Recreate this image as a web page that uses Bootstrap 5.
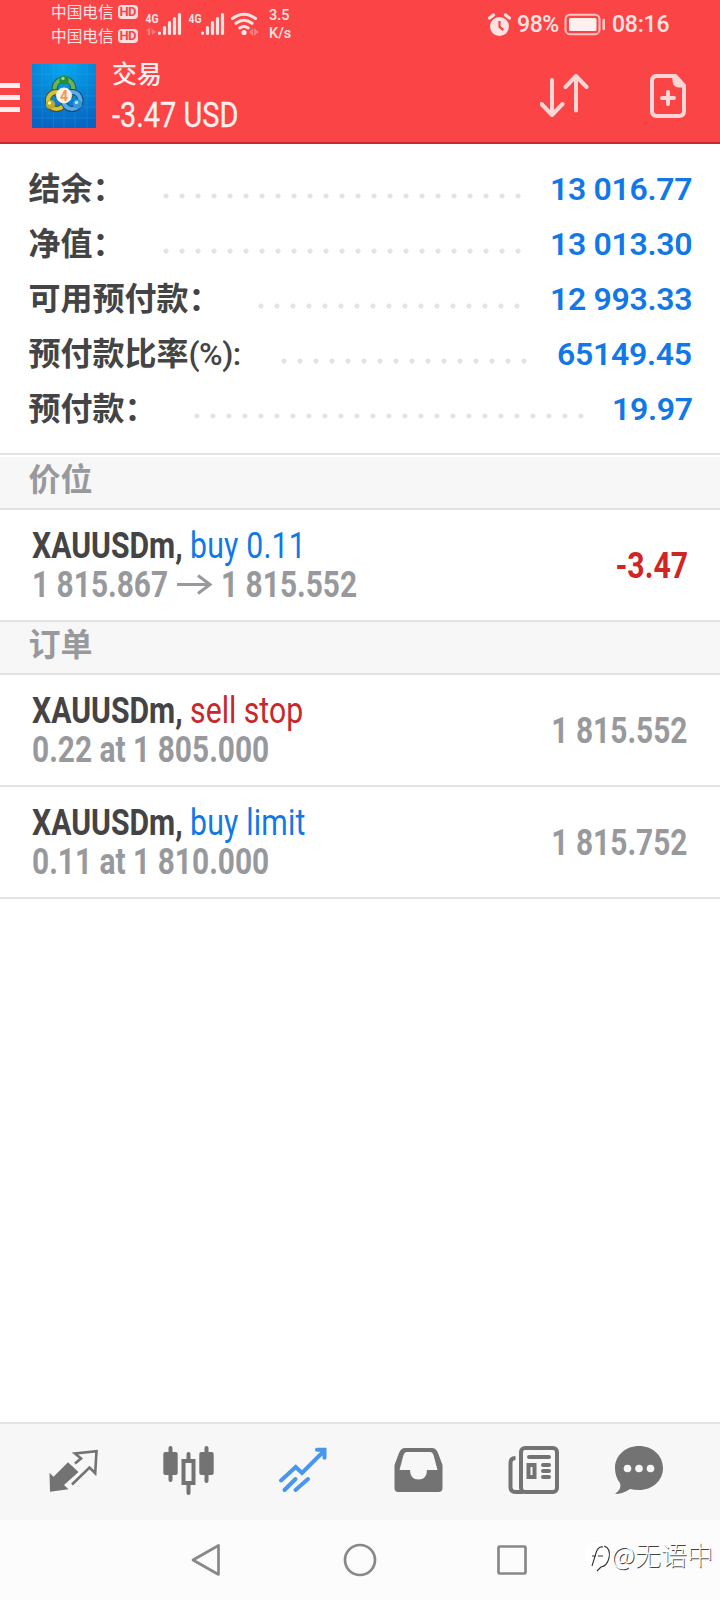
<!DOCTYPE html>
<html lang="zh-CN">
<head>
<meta charset="utf-8">
<meta name="viewport" content="width=device-width, initial-scale=1">
<title>交易</title>
<link href="https://cdn.jsdelivr.net/npm/bootstrap@5.3.0/dist/css/bootstrap.min.css" rel="stylesheet">
<style>
  body { font-family: Roboto, "Noto Sans CJK SC", sans-serif; background: #fff; color: #444; }
  .screen { width: 720px; height: 1600px; }
  svg { display: block; flex: none; }
  .cn { font-family: "Noto Sans CJK SC", sans-serif; }
  .cond { display: block; width: max-content; white-space: pre; font-size: 37px; line-height: 39px; transform: scaleX(.815); transform-origin: 0 50%; }
  .cond.from-end { transform-origin: 100% 50%; }
  .cond.soft, .soft .cond { transform: scaleX(.808); }
  .cond.opening { width: 145px; }
  .cond.profit { font-size: 35px; line-height: 38px; margin-top: 10px; transform: scaleX(.826); -webkit-text-stroke: .3px currentColor; }
  .top-area { background: #fb4446; border-bottom: 2px solid #c2282d; height: 144px; }
  .status { height: 48px; color: #ffe3e3; }
  .carriers { margin-left: 51px; font-size: 15.7px; line-height: 24px; height: 48px; width: 92px; }
  .hd { width: 20px; height: 14px; border-radius: 4px; background: #ffdede; color: #fb4446; font: 700 13px/14px Roboto, sans-serif; letter-spacing: -.5px; margin-left: 4px; }
  .speed { font-size: 14.5px; line-height: 18px; width: 30px; margin: 1px 0 0 10px; font-weight: 500; }
  .battery-text { font-size: 23px; line-height: 30px; font-weight: 500; letter-spacing: -.4px; }
  .power { padding-top: 2px; }
  .percent { width: 47px; margin-left: 5px; } .clock { width: 114px; padding-left: 6px; letter-spacing: -.2px; }
  .title-row { height: 94px; color: #fff0f0; }
  .title-text { margin-left: 12px; }
  .title-cn { font-size: 25px; line-height: 30px; margin-top: 9px; font-weight: 500; }
  .account { height: 309px; padding: 17px 28px 0 28.5px; }
  .account-row { height: 55px; }
  .account-row .cn { font-size: 32px; line-height: 51px; font-weight: 700; white-space: nowrap; }
  .account-row .percent-sign { font-family: Roboto, sans-serif; font-weight: 500; letter-spacing: -.5px; }
  .dots { flex: none; height: 16px; margin-top: 26.5px; background: radial-gradient(circle, #e3e3e3 2.2px, transparent 2.9px) 0 0 / 16px 16px repeat-x; }
  .dots-23 { width: 368px; margin-right: 24.5px; }
  .dots-17 { width: 272px; margin-right: 25px; }
  .dots-16 { width: 256px; margin-right: 25px; }
  .dots-25 { width: 400px; margin-right: 23.5px; }
  .amount { flex: none; font-size: 32px; font-weight: 600; color: #1178e8; line-height: 57px; white-space: pre; letter-spacing: -.3px; }
  .w-a { width: 142px; } .w-b { width: 135px; } .w-c { width: 80px; }
  .section-head { background: #f7f7f7; border-bottom: 2px solid #e2e2e3; color: #98999d; font-size: 32px; font-weight: 700; padding-left: 28.5px; height: 53px; line-height: 41px; }
  .section-first { border-top: 2px solid #fff; box-shadow: 0 -2px #e2e2e3; margin-top: 2px; height: 55px; }
  .deal { height: 112px; border-bottom: 2px solid #e2e2e3; padding: 16px 32px 0; }
  .deal b { font-weight: 700; color: #444; }
  .soft { color: #98999d; font-weight: 700; }
  .blue { color: #1178e8; letter-spacing: .25px; } .red { color: #c8282a; } .loss { color: #d12424; font-weight: 700; }
  .quote { margin-top: 20px; }
  .arrow { margin-right: 8px; }
  .tabs { height: 98px; background: #f7f7f7; border-top: 2px solid #e2e2e3; }
  .sysnav { height: 80px; background: #fcfcfc; }
  .stamp { right: 7px; top: 14px; color: #fff; font-size: 26px; line-height: 40px; font-weight: 300; text-shadow: .8px .8px .6px #444; }
</style>
</head>
<body>
<main class="screen d-flex flex-column overflow-hidden">
  <header class="top-area flex-shrink-0">
    <div class="status d-flex align-items-center">
      <div class="carriers cn flex-shrink-0">
        <div class="d-flex align-items-center"><span>中国电信</span><span class="hd text-center">HD</span></div>
        <div class="d-flex align-items-center"><span>中国电信</span><span class="hd text-center">HD</span></div>
      </div>
      <svg width="116" height="48" viewBox="143 0 116 48" fill="#ffe3e3">
        <g font-family="Roboto" font-size="13" font-weight="700"><text x="145.5" y="23" textLength="13" lengthAdjust="spacingAndGlyphs">4G</text><text x="188.5" y="23" textLength="13" lengthAdjust="spacingAndGlyphs">4G</text></g>
        <g stroke="#ffe3e3" stroke-width="3.2" stroke-linecap="round"><path d="M159.5 33v.3M164.5 27.500v6M169.500 22.500v11M174.500 18.500v15M179.500 14.500v19M202.500 33v.3M207.500 27.500v6M212.500 22.500v11M217.500 18.500v15M222.500 14.500v19"/></g>
        <path opacity=".35" d="M146 31l4-4v8h-2v-4zM151 28l5 4-4 3zM249 32l4-4v8zM254 28l4.500 4-4.500 4z"/>
        <g fill="none" stroke="#ffe3e3" stroke-width="3" stroke-linecap="round"><path d="M232.500 18.500q11.500-8.500 23 0M236 23.300q8-6 16 0M239.800 28q4.200-3 8.400 0"/></g><circle cx="244" cy="32.500" r="2.600"/>
      </svg>
      <div class="speed"><div>3.5</div><div>K/s</div></div>
      <div class="power d-flex align-items-center ms-auto">
        <svg width="25" height="26" viewBox="487 11 25 26"><circle cx="499.500" cy="25.500" r="9.500" fill="#ffe3e3"/><path d="M499.500 20v6l4 3" fill="none" stroke="#fb4446" stroke-width="2.200"/><path d="M489.500 17l4-3M509.500 17l-4-3" stroke="#ffe3e3" stroke-width="3.200" stroke-linecap="round"/></svg>
        <span class="battery-text percent">98%</span>
        <svg width="42" height="24" viewBox="564 13 42 24"><rect x="565.500" y="14.700" width="34" height="19.500" rx="4.500" fill="none" stroke="#ffc5c5" stroke-width="2"/><rect x="569" y="18" width="27.500" height="13" rx="1.500" fill="#fff0f0"/><path d="M603.700 20v9" stroke="#ffc5c5" stroke-width="2.600" stroke-linecap="round"/></svg>
        <span class="battery-text clock">08:16</span>
      </div>
    </div>
    <div class="title-row d-flex">
      <svg width="20" height="94" viewBox="0 48 20 94" fill="#fff0f0"><path d="M0 83h20v5H0zM0 95h20v5H0zM0 107h20v5H0z"/></svg>
      <svg class="ms-2" width="72" height="94" viewBox="28 48 72 94">
        <defs><radialGradient id="sky" cx=".5" cy="0" r="1"><stop stop-color="#06a9ee"/><stop offset="1" stop-color="#0864c1"/></radialGradient></defs>
        <path fill="url(#sky)" d="M32 64h64v64H32z"/>
        <path d="M42 64v64M53.500 64v64M64 64v64M75 64v64M87 64v64M32 74h64M32 85h64M32 96h64M32 107h64M32 118h64" stroke="#37b3ef" stroke-width=".6" opacity=".4"/>
        <g fill="none">
          <circle cx="64" cy="88.500" r="9.300" stroke="#1e5940" stroke-width="6"/><circle cx="64" cy="88.500" r="9.300" stroke="#66b658" stroke-width="4.200"/>
          <circle cx="56.500" cy="100.500" r="8.500" stroke="#514c28" stroke-width="6"/><circle cx="56.500" cy="100.500" r="8.500" stroke="#cfc43d" stroke-width="4.200"/>
          <circle cx="72" cy="100.500" r="8.500" stroke="#164777" stroke-width="6"/><circle cx="72" cy="100.500" r="8.500" stroke="#55ace6" stroke-width="4.200"/>
        </g>
        <circle cx="64" cy="80" r="4.600" fill="#278e38"/><circle cx="50.500" cy="104.500" r="4.600" fill="#bca82a"/><circle cx="77.500" cy="104" r="4.600" fill="#3896d7"/><circle cx="63" cy="78.500" r="1.700" fill="#9bd88c"/><circle cx="49.500" cy="103" r="1.700" fill="#fff9a0"/><circle cx="76.500" cy="102.500" r="1.700" fill="#b6e5ff"/>
        <circle cx="64" cy="95.500" r="7.900" fill="#f8f1eb"/><text x="64" y="100.500" text-anchor="middle" font-family="Roboto" font-weight="700" font-size="14" fill="#ed9b4b">4</text>
      </svg>
      <div class="title-text">
        <div class="title-cn cn">交易</div>
        <span class="cond profit">-3.47 USD</span>
      </div>
      <svg class="ms-auto" width="180" height="94" viewBox="540 48 180 94" fill="none" stroke="#ffd6d6" stroke-width="4" stroke-linecap="round" stroke-linejoin="round"><path d="M552 80v35M541.500 104l10.500 11 10.500-11M576 110.500V76M565.500 87L576 76l10.500 11"/><path d="M655 76h20.500l8.500 9.500V111q0 5-5 5H657q-5 0-5-5V81q0-5 5-5M668 92v12M662 98h12"/><path d="M673 76h4l8 9v2h-6q-6 0-6-6z" fill="#ffd6d6" stroke-width="1"/></svg>
    </div>
  </header>

  <section class="account flex-shrink-0">
    <div class="account-row d-flex"><span class="cn">结余：</span><i class="dots dots-23 ms-auto"></i><span class="amount w-a">13 016.77</span></div>
    <div class="account-row d-flex"><span class="cn">净值：</span><i class="dots dots-23 ms-auto"></i><span class="amount w-a">13 013.30</span></div>
    <div class="account-row d-flex"><span class="cn">可用预付款：</span><i class="dots dots-17 ms-auto"></i><span class="amount w-a">12 993.33</span></div>
    <div class="account-row d-flex"><span class="cn">预付款比率<span class="percent-sign">(%):</span></span><i class="dots dots-16 ms-auto"></i><span class="amount w-b">65149.45</span></div>
    <div class="account-row d-flex"><span class="cn">预付款：</span><i class="dots dots-25 ms-auto"></i><span class="amount w-c">19.97</span></div>
  </section>

  <h2 class="section-head section-first cn mb-0 flex-shrink-0">价位</h2>
  <article class="deal d-flex justify-content-between flex-shrink-0">
    <div><span class="cond"><b>XAUUSDm,</b> <span class="blue">buy 0.11</span></span>
      <div class="soft d-flex"><span class="cond opening">1 815.867</span><svg class="arrow" width="36" height="39" viewBox="0 0 36 39" fill="none" stroke="#98999d" stroke-width="3"><path d="M0 19.500h33M21 10.500l12 9-12 9"/></svg><span class="cond">1 815.552</span></div></div>
    <span class="cond from-end loss quote">-3.47</span>
  </article>
  <h2 class="section-head cn mb-0 flex-shrink-0">订单</h2>
  <article class="deal d-flex justify-content-between flex-shrink-0">
    <div><span class="cond"><b>XAUUSDm,</b> <span class="red">sell stop</span></span><span class="cond soft">0.22 at 1 805.000</span></div>
    <span class="cond from-end soft quote">1 815.552</span>
  </article>
  <article class="deal d-flex justify-content-between flex-shrink-0">
    <div><span class="cond"><b>XAUUSDm,</b> <span class="blue">buy limit</span></span><span class="cond soft">0.11 at 1 810.000</span></div>
    <span class="cond from-end soft quote">1 815.752</span>
  </article>

  <nav class="tabs mt-auto flex-shrink-0">
    <svg width="720" height="96" viewBox="0 1424 720 96" fill="#737373">
      <path d="M49.500 1472.700l4 4L68 1462.300l10.500 9.700-14.500 13 4.500 4.300-18.500 2.500z"/>
      <path d="M75 1463.500l6-5-6-5 21.500-2.300-1.300 22-5.700-5.700-17.500 17" fill="none" stroke="#737373" stroke-width="2.600"/>
      <rect x="163.300" y="1452" width="14.400" height="23" rx="2"/><rect x="199.300" y="1452" width="14.400" height="23" rx="2"/><rect x="183.500" y="1461" width="10" height="22" fill="none" stroke="#737373" stroke-width="4"/><path d="M170.500 1448v32M206.500 1448v33M188.500 1454v6M188.500 1483v10" stroke="#737373" stroke-width="4" stroke-linecap="round"/>
      <path d="M281 1480.500l14.700-13.500 6.300 6 22-22M284.500 1490l11-11M295.500 1490l12.500-11M317 1449.700h7.500v8" fill="none" stroke="#4797ee" stroke-width="4" stroke-linecap="round"/>
      <path fill-rule="evenodd" d="M405 1448h27q4 0 6 5l4.500 12v23q0 4-4 4h-40q-4 0-4-4v-23l4.500-12q2-5 6-5zm1.500 4q-2 0-3 3l-4 15h10.500q0 9.500 8.500 9.500t8.500-9.500H437.500l-4-15q-1-3-3-3z"/>
      <g fill="none" stroke="#737373" stroke-width="4"><rect x="521" y="1448" width="36" height="44" rx="4"/><path d="M515.500 1458q-5 0-5 5v24q0 5 5 5h8"/><path d="M529 1457h20M543 1465h6M543 1471h6M543 1477h6" stroke-linecap="round"/><rect x="528.500" y="1465" width="6" height="12"/></g>
      <path d="M639 1446c13 0 24 9 24 22s-11 22-24 22q-5 0-9-1-7 5-15 5 7-5 5-11-5-6-5-15c0-13 11-22 24-22z"/><g fill="#f7f7f7"><circle cx="627.500" cy="1468.500" r="3.800"/><circle cx="639" cy="1468.500" r="3.800"/><circle cx="650.500" cy="1468.500" r="3.800"/></g>
    </svg>
  </nav>
  <footer class="sysnav position-relative flex-shrink-0">
    <svg width="720" height="80" viewBox="0 1520 720 80" fill="none" stroke="#888" stroke-width="2.700" stroke-linejoin="round"><path d="M218.500 1545.500v29l-25.500-14.500z"/><circle cx="360" cy="1560" r="15"/><rect x="498.500" y="1546.500" width="27" height="27" rx="1"/>
      <g stroke="none"><rect x="585" y="1543" width="25" height="25" rx="8" fill="#fff"/><path d="M592 1566l4-13q2-7 7-6M592 1556h4M598 1556h5M604 1546q7 2 5 12-2 8-8 9l-4 4" stroke="#333" stroke-width="1.100"/></g></svg>
    <span class="stamp position-absolute cn">@无语中</span>
  </footer>
</main>
<script src="https://cdn.jsdelivr.net/npm/bootstrap@5.3.0/dist/js/bootstrap.bundle.min.js"></script>
</body>
</html>
